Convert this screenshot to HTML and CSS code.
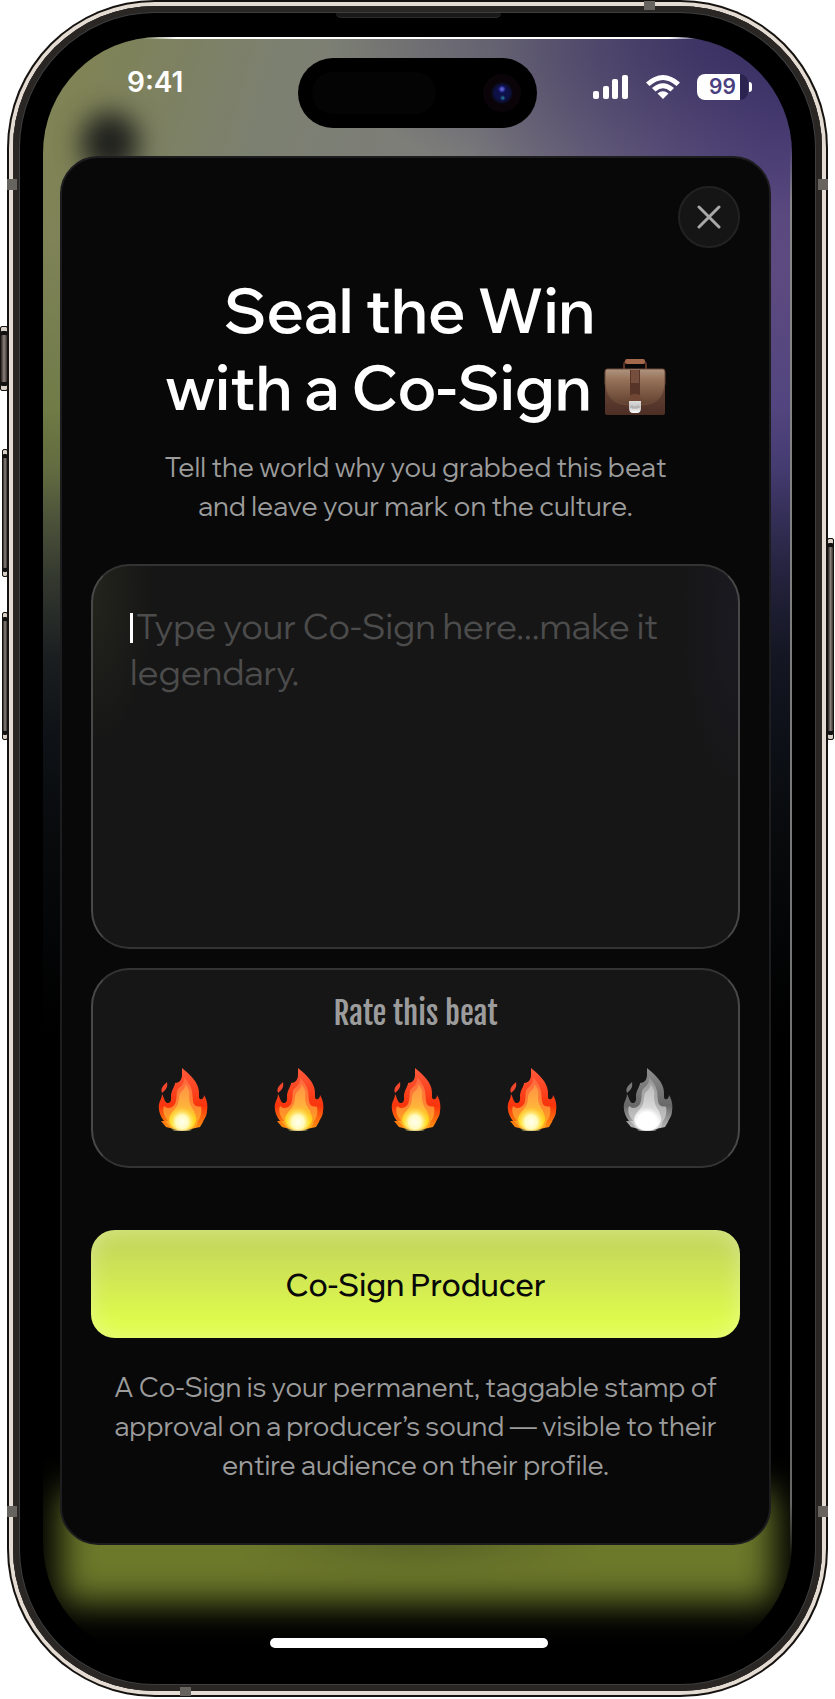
FILE: index.html
```html
<!DOCTYPE html>
<html lang="en">
<head>
<meta charset="utf-8">
<meta name="viewport" content="width=device-width, initial-scale=1">
<title>Seal the Win with a Co-Sign</title>
<link rel="stylesheet" href="styles.css">
</head>
<body>
<svg class="defs" aria-hidden="true">
  <defs>
    <linearGradient id="f-red" x1="0" y1="0" x2="0" y2="1"><stop offset="0" stop-color="#ff5a3c"/><stop offset=".6" stop-color="#f8340c"/><stop offset="1" stop-color="#ff9a10"/></linearGradient>
    <linearGradient id="f-or" x1="0" y1="0" x2="0" y2="1"><stop offset="0" stop-color="#ff6640"/><stop offset=".5" stop-color="#ff8232"/><stop offset="1" stop-color="#ffb01c"/></linearGradient>
    <linearGradient id="f-ye" x1="0" y1="0" x2="0" y2="1"><stop offset="0" stop-color="#ff9045"/><stop offset=".5" stop-color="#ffb43c"/><stop offset="1" stop-color="#ffe400"/></linearGradient>
    <radialGradient id="f-wh" cx=".5" cy=".6" r=".5"><stop offset="0" stop-color="#fffff0"/><stop offset=".45" stop-color="#fffbc0"/><stop offset="1" stop-color="#ffe63c" stop-opacity="0"/></radialGradient>
    <symbol id="flame" viewBox="0 0 50 64">
      <path fill="url(#f-red)" d="M24 1C30 6 38 13 40 20C42 26 40 31 42 32C45 33 46 30 46 28C49 33 50 38 49 44C49 49 46 52 45 55L42 60L33 62Q24 65 16 62L8 60L3 54L6 54C2 49 0 43 1 37C2 33 4 31 4 27C6 30 6 34 9 36C14 36 13 31 13 28C14 22 17 19 17 16C21 16 24 13 24 8Z"/>
      <path fill="#f4452d" d="M9 15C10 20 8 23 4 26C2 21 6 18 9 15Z"/>
      <path fill="url(#f-or)" d="M26 10C30 15 33 19 34 24C35 30 34 37 38 39C41 40 42 39 43 40C44 45 43 50 40 54L38 60Q24 66 12 59L7 54L10 54C6 49 4 44 6 39C9 42 14 42 17 37C20 30 17 24 21 21C25 18 27 14 26 10Z"/>
      <path fill="url(#f-ye)" d="M27 17C31 21 32 25 31 30C31 36 33 40 36 44C37 48 39 50 38 54C36 60 30 62 24 62C17 62 12 58 11 53C11 47 16 44 19 39C22 34 20 28 23 25C26 22 28 20 27 17Z"/>
      <ellipse cx="24" cy="52" rx="14" ry="15" fill="url(#f-wh)"/>
    </symbol>
    <linearGradient id="b-body" x1="0" y1="0" x2="0" y2="1"><stop offset="0" stop-color="#765342"/><stop offset="1" stop-color="#4d2e25"/></linearGradient>
    <linearGradient id="b-flap" x1="0" y1="0" x2="0" y2="1"><stop offset="0" stop-color="#b09580"/><stop offset=".3" stop-color="#967259"/><stop offset="1" stop-color="#60402f"/></linearGradient>
    <linearGradient id="m-metal" x1="0" y1="0" x2="0" y2="1"><stop offset="0" stop-color="#dcdcdc"/><stop offset=".5" stop-color="#c5c5c5"/><stop offset="1" stop-color="#fff"/></linearGradient>
  </defs>
</svg>

<div class="phone">
  <span class="key key-action"></span><span class="key key-up"></span><span class="key key-down"></span><span class="key key-power"></span>
  <div class="rim"><div class="steel"><div class="bezel">
    <span class="speaker"></span>
    <main class="screen">
      <span class="glow"></span><span class="blob"></span><span class="edge-top"></span><span class="edge-right"></span>
      <header class="status">
        <time class="clock">9:41</time>
        <div class="island"><span class="sensor"></span><span class="camera"></span></div>
        <div class="indicators">
          <svg width="36" height="24" viewBox="0 0 36 24" fill="#fff" aria-label="Signal"><rect y="16" width="6" height="8" rx="2"/><rect x="10" y="11" width="6" height="13" rx="2"/><rect x="19" y="4" width="6" height="20" rx="2"/><rect x="29" width="6" height="24" rx="2"/></svg>
          <svg width="34" height="24" viewBox="0 0 34 24" fill="#fff" aria-label="Wi-Fi"><path d="M0 7.500Q17-7.500 34 7.500L30.500 11Q17-1 3.500 11Z"/><path d="M6 13Q17 3.500 28 13L24.500 16.500Q17 10 9.500 16.500Z"/><path d="M11.500 18.500Q17 14 22.500 18.500L17 24Z"/></svg>
          <span class="battery"><span class="level">99</span></span>
        </div>
      </header>

      <section class="sheet" aria-labelledby="heading">
        <button class="close" type="button" aria-label="Close"><svg width="24" height="24" viewBox="0 0 24 24" fill="none" stroke="#a8a8a8" stroke-width="3" stroke-linecap="round"><path d="M2 2L22 22M22 2L2 22"/></svg></button>
        <h1 class="title" id="heading">Seal the Win&nbsp;<br>with a Co-Sign <svg class="briefcase" viewBox="0 0 62 56" role="img" aria-label="briefcase">
          <path d="M20 11V6Q20 2 25 2H37Q42 2 42 6V11" fill="none" stroke="#5d3527" stroke-width="2"/>
          <rect x="21" y="0" width="20" height="5" rx="2" fill="#a4684d"/>
          <rect x="1" y="11" width="60" height="45" rx="2" fill="url(#b-body)"/>
          <path d="M3 10H59Q61 10 61 13V24Q60 45 37 46H25Q2 45 1 24V13Q1 10 3 10Z" fill="url(#b-flap)" stroke="#6d4b39" stroke-width="1"/>
          <path d="M26 11H36V36H26Z" fill="#563428"/><path d="M27 11H35V24H27Z" fill="#8a614b" opacity=".6"/>
          <path d="M25 40Q25 35 31 35Q37 35 37 40V43H25Z" fill="#704735"/>
          <path d="M25 42H37V49Q37 54 33 54H29Q25 54 25 49Z" fill="url(#m-metal)"/><path d="M26 48H36M28 46V49H34V46" fill="none" stroke="#aaa" stroke-width="1"/>
        </svg></h1>
        <p class="lead">Tell the world why you grabbed this beat<br>and leave your mark on the culture.</p>
        <form class="form">
          <div class="field"><textarea class="message" aria-label="Your Co-Sign" placeholder="Type your Co-Sign here...make it legendary."></textarea><span class="caret"></span></div>
          <fieldset class="rating">
            <legend class="rating-title">Rate this beat</legend>
            <div class="flames">
              <button class="flame" type="button" aria-label="1 flame"><svg><use href="#flame"/></svg></button>
              <button class="flame" type="button" aria-label="2 flames"><svg><use href="#flame"/></svg></button>
              <button class="flame" type="button" aria-label="3 flames"><svg><use href="#flame"/></svg></button>
              <button class="flame" type="button" aria-label="4 flames"><svg><use href="#flame"/></svg></button>
              <button class="flame flame-off" type="button" aria-label="5 flames"><svg><use href="#flame"/></svg></button>
            </div>
          </fieldset>
          <button class="submit" type="button">Co-Sign Producer</button>
        </form>
        <p class="note">A Co-Sign is your permanent, taggable stamp of<br>approval on a producer’s sound — visible to their<br>entire audience on their profile.</p>
      </section>
      <div class="home"></div>
    </main>
  </div></div></div>
  <span class="band band-tl"></span><span class="band band-tr"></span><span class="band band-bl"></span><span class="band band-br"></span><span class="band-h band-top"></span><span class="band-h band-bottom"></span>
</div>
</body>
</html>
```
FILE: styles.css
```css
* { box-sizing: border-box; }
body { margin: 0; background: #fff; font-family: "Wix Madefor Display", Inter, "Liberation Sans", sans-serif; color: #fff; }
.defs { position: absolute; width: 0; height: 0; }
button { font: inherit; padding: 0; border: 0; cursor: pointer; }

/* Device frame */
.phone { position: relative; margin: 0 7px; }
.rim { position: relative; padding: 2px; border-radius: 148px; background: #15120f; }
.steel { padding: 4px; border-radius: 146px; background: #e4dcd3; }
.bezel {
  position: relative; padding: 31px 30px 32px; border-radius: 142px; background: #000;
  box-shadow: inset 0 0 0 6px #2a2624, inset 0 0 0 7px #3c3e40;
}
.key { position: absolute; background: linear-gradient(90deg, #2a2421, #8a817b, #3b3430); border: 1px solid #15120f; border-radius: 2px; box-shadow: inset 0 4px #d8cfc6, inset 0 -4px #d8cfc6, inset 0 8px #111, inset 0 -8px #111; }
.key-action { left: -7px; top: 326px; width: 8px; height: 65px; }
.key-up { left: -5px; top: 449px; width: 6px; height: 128px; }
.key-down { left: -5px; top: 612px; width: 6px; height: 128px; }
.key-power { right: -6px; top: 538px; width: 7px; height: 202px; }
.band { position: absolute; width: 10px; height: 11px; background: #67645f; }
.band-tl { left: 0; top: 179px; }
.band-tr { right: 0; top: 179px; }
.band-bl { left: 0; bottom: 180px; }
.band-br { right: 0; bottom: 180px; }
.band-h { position: absolute; width: 11px; height: 9px; background: #67645f; }
.band-top { right: 173px; top: 1px; }
.band-bottom { left: 173px; bottom: 1px; }
.speaker { position: absolute; left: 50%; top: 7px; width: 165px; height: 5px; margin-left: -82px; background: #181818; border-bottom: 1px solid #2c2c2c; border-radius: 0 0 5px 5px; }

/* Wallpaper */
.screen {
  position: relative; overflow: hidden; border-radius: 116px; padding: 0 21px 11px 17px;
  background:
    linear-gradient(180deg, #0b0f1400 0, #0b0f1400 370px, #0b0f1422 430px, #0b0f1460 480px, #0b0f14a0 540px, #0b0f14dd 620px, #0b0f14f8 700px, #080a0c 800px, #000 1000px),
    radial-gradient(420px 180px at 94% 0, #30265acc, #0000),
    radial-gradient(200px 200px at 100% 230px, #6a508288, #0000),
    radial-gradient(160px 200px at 0 400px, #6a783ccc, #0000),
    linear-gradient(106deg, #7f8355 4%, #7c8070 20%, #7d7d7c 38%, #62587f 54%, #4f457c 62%, #483a88 100%);
  background-color: #000;
}
.glow { position: absolute; left: 18px; right: 18px; bottom: 56px; height: 112px; background: radial-gradient(180px 30px at 50% 44px, #4a5224, #0000), #6c782a; filter: blur(17px); }
.blob { position: absolute; left: 38px; top: 75px; width: 58px; height: 62px; border-radius: 50%; background: #20211e; filter: blur(13px); }
.edge-top { position: absolute; left: 100px; right: 90px; top: 0; height: 2px; background: linear-gradient(90deg, #fff0, #fff 6%, #fff 94%, #fff0); }
.edge-right { position: absolute; right: 0; top: 110px; bottom: 100px; width: 2px; background: linear-gradient(#fff0, #888 4%, #666 96%, #fff0); }

/* Status bar */
.status { position: relative; display: grid; grid-template-columns: 238px 239px 1fr; height: 119px; padding-top: 21px; align-items: start; }
.clock { padding: 6px 0 0 67px; font: 600 28px/36px Inter, sans-serif; }
.island { display: flex; align-items: center; justify-content: space-between; height: 70px; padding: 0 16px 0 14px; border-radius: 35px; background: #000; }
.sensor { width: 124px; height: 42px; border-radius: 21px; background: #040404; }
.camera { width: 38px; height: 38px; border-radius: 50%; background: radial-gradient(circle at 50% 40%, #5a60c8 0 1px, #1c1f7c 3px, #0000 4px), radial-gradient(circle at 52% 63%, #1a6a84 0 1px, #132a60 2px, #0000 3px), radial-gradient(circle, #0e1148 0 7px, #0a0b20 10px, #0a0408 11px); }
.indicators { display: flex; align-items: center; gap: 17px; padding: 16px 0 0 56px; }
.battery { position: relative; flex: none; width: 51px; height: 26px; border-radius: 8px; background: linear-gradient(90deg, #fff 43px, #2b2450 43px); }
.battery::after { content: ""; position: absolute; right: -4px; top: 8px; width: 3px; height: 10px; border-radius: 0 3px 3px 0; background: #fff; }
.level { display: block; padding-left: 12px; font: 600 21px/26px Inter, sans-serif; color: #4a4080; }

/* Sheet */
.sheet { position: relative; display: flex; flex-direction: column; padding: 28px 29px 58px; border: 2px solid #1d1d1f; border-radius: 38px; background: #080808; text-align: center; }
.close { align-self: flex-end; display: grid; place-items: center; width: 62px; height: 62px; border: 2px solid #222; border-radius: 50%; background: #151515; }
.title { margin: 24px 0 0; font-size: 62px; line-height: 77px; font-weight: 600; white-space: nowrap; }
.briefcase { width: 62px; height: 56px; vertical-align: -5px; }
.lead, .note { margin: 0; font-size: 27px; line-height: 39px; font-weight: 400; color: #9c9c9c; white-space: nowrap; }
.lead { margin-top: 22px; }
.form { display: flex; flex-direction: column; }
.field { position: relative; display: flex; margin-top: 38px; }
.message, .rating { width: 100%; border: 2px solid; border-color: #333 #484848; border-radius: 38px; background: #161616; }
.message { height: 385px; padding: 37px; resize: none; outline: 0; font: 400 35px/46px "Wix Madefor Display", Inter, "Liberation Sans", sans-serif; text-indent: 6px; color: #fff; background: radial-gradient(60px 150px at 0 30px, #23241c, #0000), radial-gradient(60px 180px at 100% 60px, #1b1a22, #0000), #161616; }
.message::placeholder { color: #4c4c4c; opacity: 1; }
.caret { position: absolute; left: 39px; top: 49px; width: 3px; height: 30px; background: #fff; }
.rating { min-width: 0; height: 200px; margin: 19px 0 0; padding: 22px 51px 0; }
.rating-title { float: left; width: 100%; padding: 0; font: 400 31px/44px "Fjalla One", "Roboto Condensed", "Liberation Sans Narrow", sans-serif; color: #9c9c9c; }
.flames { clear: both; display: flex; justify-content: space-between; padding-top: 31px; }
.flame { display: grid; place-items: center; width: 78px; height: 64px; background: none; }
.flame svg { width: 50px; height: 64px; }
.flame-off { filter: grayscale(1) brightness(1.15); }
.submit { height: 108px; margin-top: 62px; border-radius: 24px; background: linear-gradient(#c6d95a 15%, #dffb4c 85%); box-shadow: inset 0 0 22px #ffffff55; font-size: 31px; font-weight: 500; color: #080808; }
.note { margin-top: 30px; }
.home { position: relative; width: 278px; height: 10px; margin: 93px 0 0 calc(50% - 146px); border-radius: 5px; background: #fff; }
```
